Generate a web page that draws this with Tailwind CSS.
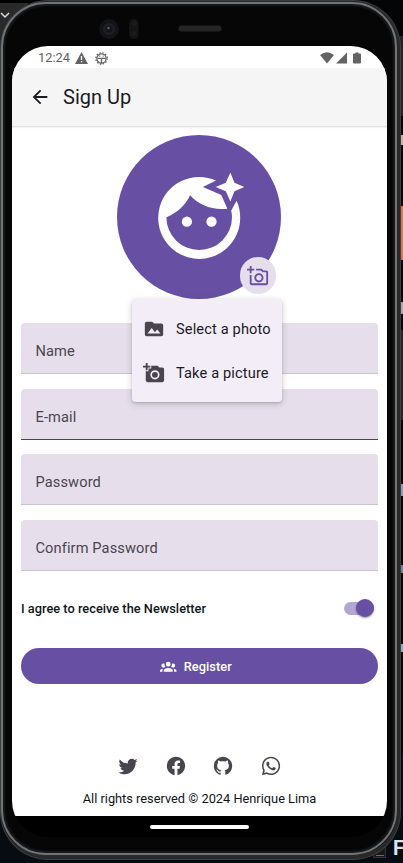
<!DOCTYPE html>
<html lang="en">
<head>
<meta charset="utf-8">
<title>Sign Up</title>
<script src="https://cdn.jsdelivr.net/npm/@tailwindcss/browser@4"></script>
</head>
<body class="relative h-[863px] w-[403px] overflow-hidden bg-[#030507] font-['Roboto',sans-serif]">
<!-- desktop behind the device -->
<div class="absolute left-0 top-0 h-12 w-7 bg-[#292929]"></div>
<div class="absolute left-0 top-0 h-[3px] w-20 bg-black"></div>
<div class="absolute right-0 top-[36px] h-[80px] w-3 bg-[#242424]"></div>
<div class="absolute right-0 top-[135px] h-[10px] w-[2px] bg-[#bdb8a5]"></div>
<div class="absolute right-0 top-[206px] h-[54px] w-[3px] bg-[#df7258]"></div>
<div class="absolute right-0 top-[302px] h-3 w-[2px] bg-[#aaaaaa]"></div>
<div class="absolute right-0 top-[330px] h-[90px] w-[2px] bg-[#262626]"></div>
<div class="absolute right-0 top-[484px] h-3 w-[2px] bg-[#83a2b6]"></div>
<div class="absolute right-0 top-[565px] h-2 w-[2px] bg-[#74899a]"></div>
<div class="absolute right-0 top-[644px] h-2 w-[2px] bg-[#8fb0b9]"></div>
<div class="absolute bottom-0 left-0 h-[110px] w-full bg-[#070b12]"></div>
<div class="absolute bottom-[5px] left-[373px] h-4 w-[13px] border border-[#333333] bg-[#171717]"></div>
<div class="absolute left-[376px] top-[855px] h-px w-2 bg-[#b44a61]"></div>
<div class="absolute left-[393px] top-[836px] text-[20px] font-bold leading-6 text-[#dce3ee]">F</div>

<!-- device -->
<div class="absolute left-0 top-0 h-[860px] w-[401px] rounded-[48px] bg-[#3c3e3f] p-px">
 <div class="h-full w-full rounded-[47px] border-b-[4px] border-l-0 border-r-[3px] border-t border-[#29292a] bg-[#0b0a0b]">
  <div class="h-full w-full rounded-[45px] border-2 border-[#707476] bg-[#060607] shadow-[inset_0_0_2px_2px_#1c1c1d]"></div>
 </div>
</div>
<svg class="absolute left-0 top-[11px] h-2 w-[10px]" viewBox="0 0 10 8" fill="none" stroke="#ddd" stroke-width="1.500"><path d="M1 2l4 4 4-4"/></svg>
<svg class="absolute left-[96px] top-[15px] h-7 w-[156px]" viewBox="0 0 156 28">
 <circle cx="13" cy="14" r="10" fill="#141416"/><circle cx="13" cy="14" r="6" fill="#1e1f24"/><circle cx="13" cy="14" r="3.500" fill="#11131d"/><circle cx="12.500" cy="13" r="1.300" fill="#535970"/>
 <rect x="33" y="4" width="9.500" height="20" rx="4.500" fill="#141415"/><circle cx="38" cy="8.500" r="3" fill="#1a1a1b"/><circle cx="38" cy="18.500" r="3" fill="#1a1a1b"/>
 <rect x="82.500" y="10.500" width="43" height="6" rx="3" fill="#252525"/>
</svg>

<!-- screen -->
<main class="absolute left-3 top-[46px] flex h-[791px] w-[375px] flex-col overflow-hidden rounded-[36px] bg-black">
 <div class="flex h-[770px] flex-col bg-white">
  <div class="flex h-[22px] shrink-0 items-center pl-[26px] pr-[25px] text-[#636363]">
   <span class="w-[37px] pt-0.5 text-[12.800px] leading-4">12:24</span>
   <svg class="mt-0.5 h-3 w-[13px]" viewBox="0 0 13 12"><path fill="currentColor" d="M6.500 0L13 12H0z"/><path stroke="#fff" stroke-width="1.300" d="M6.500 4v4M6.500 9v1.300"/></svg>
   <svg class="ml-[7px] mt-0.5 h-[13px] w-[13px]" viewBox="0 0 13 13" fill="none" stroke="currentColor"><circle cx="6.500" cy="6.500" r="5.700" stroke-width="1.300" stroke-dasharray="1.500 1.484"/><circle cx="6.500" cy="6.500" r="4.600" stroke-width="1.200"/><path stroke-width="1.300" d="M2.500 6.400h8M6.500 6.400v4.500M4.300 4.200h1M7.700 4.200h1"/></svg>
   <svg class="ml-auto mt-0.5 h-[12px] w-[42px]" viewBox="0 0 42 12" fill="currentColor"><path d="M0 3Q7-2.500 14 3L7 11.500zM16 11.500L27 .5v11zM33 2.500Q33 1.500 34 1.500h1.500V.5h3v1H40q1 0 1 1v8q0 1-1 1h-6q-1 0-1-1z"/></svg>
  </div>
  <header class="flex h-[59px] shrink-0 items-center border-b border-[#e2e2e2] bg-[#f5f5f5] pl-[17px] shadow-[0_1px_1px_#0000000c]">
   <svg class="h-[22px] w-[22px]" viewBox="0 0 24 24" fill="#1c1b1f"><path d="M20 11H7.830l5.590-5.590L12 4l-8 8 8 8 1.410-1.410L7.830 13H20z"/></svg>
   <h1 class="ml-[12px] text-[20px] leading-6 text-[#1c1b1f]">Sign Up</h1>
  </header>
  <section class="flex h-[196px] shrink-0 justify-center pr-px pt-[8.300px]">
   <div class="relative flex h-[164px] w-[164px] items-center justify-center rounded-full bg-[#6750a4]">
    <svg class="h-[98.400px] w-[98.400px]" viewBox="0 0 24 24" fill="#fff">
     <circle cx="9" cy="13.100" r="1.250"/><circle cx="15" cy="13.100" r="1.250"/>
     <path d="M19.600 1.100L20.600 3.600 23 4.650 20.600 5.700 19.600 8.200 18.500 5.700 16 4.650 18.500 3.600z"/>
     <path d="M21.100 8L19.800 10.400C19.930 10.920 20 11.450 20 12A8 8 0 0 1 4 12C6.610 10.950 8.740 9 9.760 6.640C11.600 8.720 14.400 10 17.500 10Q18.200 10 18.870 9.950L17.400 6.600 12.900 4.650 16.100 3.050A10 10 0 1 0 22 12C22 10.580 21.690 9.220 21.100 8z"/>
    </svg>
    <div class="absolute left-[122.500px] top-[122px] flex h-[36.500px] w-[36.500px] items-center justify-center rounded-full bg-[#e6dfeb]">
     <svg class="h-[22px] w-[22px]" viewBox="0 0 24 24" fill="#6750a4"><path d="M21 6h-3.170L16 4h-6v2h5.120l1.830 2H21v12H5v-9H3v9c0 1.100.9 2 2 2h16c1.100 0 2-.9 2-2V8c0-1.100-.9-2-2-2zM8 14c0 2.760 2.240 5 5 5s5-2.240 5-5-2.240-5-5-5-5 2.240-5 5zm5-3c1.650 0 3 1.350 3 3s-1.350 3-3 3-3-1.350-3-3 1.350-3 3-3zM5 6h3V4H5V1H3v3H0v2h3v3h2z"/></svg>
    </div>
   </div>
  </section>
  <form class="flex shrink-0 flex-col gap-[14.700px] px-[9px] text-[14.600px] leading-5 tracking-[0.12px] text-[#49454f]">
   <div class="flex h-[51px] items-center rounded-t-[4px] border-b border-[#cac4d0] bg-[#e6dfeb] pl-[14.500px] pt-[6px]">Name</div>
   <div class="flex h-[51px] items-center rounded-t-[4px] border-b border-[#49454f] bg-[#e6dfeb] pl-[14.500px] pt-[6px]">E-mail</div>
   <div class="flex h-[51px] items-center rounded-t-[4px] border-b border-[#cac4d0] bg-[#e6dfeb] pl-[14.500px] pt-[6px]">Password</div>
   <div class="flex h-[51px] items-center rounded-t-[4px] border-b border-[#cac4d0] bg-[#e6dfeb] pl-[14.500px] pt-[6px]">Confirm Password</div>
  </form>
  <div class="mt-[23px] flex h-7 shrink-0 items-center justify-between pl-[9px] pr-[13px]">
   <span class="pt-px text-[12.800px] font-medium tracking-[0.01px] text-[#101518]">I agree to receive the Newsletter</span>
   <div class="flex h-[13px] w-[30px] items-center justify-end rounded-full bg-[#b3a7d2]"><div class="h-[18.500px] w-[18.500px] shrink-0 rounded-full bg-[#6750a4] shadow-[0_1px_2px_#00000066]"></div></div>
  </div>
  <div class="mx-[9px] mt-[26px] flex h-9 shrink-0 items-center justify-center gap-[7px] rounded-full bg-[#6750a4] pr-[7px] pt-px text-white">
   <svg class="h-[16.500px] w-[16.500px]" viewBox="0 0 24 24" fill="currentColor"><path d="M12,5.500A3.500,3.500 0 0,1 15.500,9A3.500,3.500 0 0,1 12,12.500A3.500,3.500 0 0,1 8.500,9A3.500,3.500 0 0,1 12,5.500M5,8C5.560,8 6.080,8.150 6.530,8.420C6.380,9.850 6.800,11.270 7.660,12.380C7.160,13.340 6.160,14 5,14A3,3 0 0,1 2,11A3,3 0 0,1 5,8M19,8A3,3 0 0,1 22,11A3,3 0 0,1 19,14C17.840,14 16.840,13.340 16.340,12.380C17.200,11.270 17.620,9.850 17.470,8.420C17.920,8.150 18.440,8 19,8M5.500,18.250C5.500,16.180 8.410,14.500 12,14.500C15.590,14.500 18.500,16.180 18.500,18.250V20H5.500V18.250M0,20V18.500C0,17.110 1.890,15.940 4.450,15.600C3.860,16.280 3.500,17.220 3.500,18.250V20H0M24,20H20.500V18.250C20.500,17.220 20.140,16.280 19.550,15.600C22.110,15.940 24,17.110 24,18.500V20Z"/></svg>
   <span class="text-[12.800px] font-medium tracking-[0.04px]">Register</span>
  </div>
  <footer class="mt-auto flex shrink-0 flex-col items-center pb-[8px]">
   <div class="flex gap-[25.400px] text-[#49454f]">
    <svg class="h-[22px] w-[22px]" viewBox="0 0 24 24" fill="currentColor"><path d="M22.460,6C21.690,6.350 20.860,6.580 20,6.690C20.880,6.160 21.560,5.320 21.880,4.310C21.050,4.810 20.130,5.160 19.160,5.360C18.370,4.500 17.260,4 16,4C13.650,4 11.730,5.920 11.730,8.290C11.730,8.630 11.770,8.960 11.840,9.270C8.280,9.090 5.110,7.380 3,4.790C2.630,5.420 2.420,6.160 2.420,6.940C2.420,8.430 3.170,9.750 4.330,10.500C3.620,10.500 2.960,10.300 2.380,10V10.030C2.380,12.110 3.860,13.850 5.820,14.240C5.460,14.340 5.080,14.390 4.690,14.390C4.420,14.390 4.150,14.360 3.890,14.310C4.430,16 6,17.260 7.890,17.290C6.430,18.450 4.580,19.130 2.560,19.130C2.220,19.130 1.880,19.110 1.540,19.070C3.440,20.290 5.700,21 8.120,21C16,21 20.330,14.460 20.330,8.790C20.330,8.600 20.330,8.420 20.320,8.230C21.160,7.630 21.880,6.870 22.460,6Z"/></svg>
    <svg class="h-[22px] w-[22px]" viewBox="0 0 24 24" fill="currentColor"><path d="M12 2.040C6.500 2.040 2 6.530 2 12.060C2 17.060 5.660 21.210 10.440 21.960V14.960H7.900V12.060H10.440V9.850C10.440 7.340 11.930 5.960 14.220 5.960C15.310 5.960 16.450 6.150 16.450 6.150V8.620H15.190C13.950 8.620 13.560 9.390 13.560 10.180V12.060H16.340L15.890 14.960H13.560V21.960A10 10 0 0 0 22 12.060C22 6.530 17.500 2.040 12 2.040Z"/></svg>
    <svg class="h-[22px] w-[22px]" viewBox="0 0 24 24" fill="currentColor"><path d="M12,2A10,10 0 0,0 2,12C2,16.420 4.870,20.170 8.840,21.500C9.340,21.580 9.500,21.270 9.500,21C9.500,20.770 9.500,20.140 9.500,19.310C6.730,19.910 6.140,17.970 6.140,17.970C5.680,16.810 5.030,16.500 5.030,16.500C4.120,15.880 5.100,15.900 5.100,15.900C6.100,15.970 6.630,16.930 6.630,16.930C7.500,18.450 8.970,18 9.540,17.760C9.630,17.110 9.890,16.670 10.170,16.420C7.950,16.170 5.620,15.310 5.620,11.500C5.620,10.390 6,9.500 6.650,8.790C6.550,8.540 6.200,7.500 6.750,6.150C6.750,6.150 7.590,5.880 9.500,7.170C10.290,6.950 11.150,6.840 12,6.840C12.850,6.840 13.710,6.950 14.500,7.170C16.410,5.880 17.250,6.150 17.250,6.150C17.800,7.500 17.450,8.540 17.350,8.790C18,9.500 18.380,10.390 18.380,11.500C18.380,15.320 16.040,16.160 13.810,16.410C14.170,16.720 14.500,17.330 14.500,18.260C14.500,19.600 14.500,20.680 14.500,21C14.500,21.270 14.660,21.590 15.170,21.500C19.140,20.160 22,16.420 22,12A10,10 0 0,0 12,2Z"/></svg>
    <svg class="h-[22px] w-[22px]" viewBox="0 0 24 24" fill="currentColor"><path fill-rule="evenodd" d="M12.040 2C6.580 2 2.130 6.450 2.130 11.910C2.130 13.660 2.590 15.360 3.450 16.860L2.050 22L7.300 20.620C8.750 21.410 10.380 21.830 12.040 21.830C17.500 21.830 21.950 17.380 21.950 11.920C21.950 9.270 20.920 6.780 19.050 4.910C17.180 3.030 14.690 2 12.040 2M12.050 3.670C14.250 3.670 16.310 4.530 17.870 6.090C19.420 7.650 20.280 9.720 20.280 11.920C20.280 16.460 16.580 20.150 12.040 20.150C10.560 20.150 9.110 19.760 7.850 19L7.550 18.830L4.430 19.650L5.260 16.610L5.060 16.290C4.240 15 3.800 13.470 3.800 11.910C3.810 7.370 7.500 3.670 12.050 3.670M8.530 7.330C8.370 7.330 8.100 7.390 7.870 7.640C7.650 7.890 7 8.500 7 9.710C7 10.930 7.890 12.100 8 12.270C8.140 12.440 9.760 14.940 12.250 16C12.840 16.270 13.300 16.420 13.660 16.530C14.250 16.720 14.790 16.690 15.220 16.630C15.700 16.560 16.680 16.030 16.890 15.450C17.100 14.870 17.100 14.380 17.040 14.270C16.970 14.170 16.810 14.110 16.560 14C16.310 13.860 15.090 13.260 14.870 13.180C14.640 13.100 14.500 13.060 14.310 13.300C14.150 13.550 13.670 14.110 13.530 14.270C13.380 14.440 13.240 14.460 13 14.340C12.740 14.210 11.940 13.950 11 13.110C10.260 12.450 9.770 11.640 9.620 11.390C9.500 11.150 9.610 11 9.730 10.890C9.840 10.780 10 10.600 10.100 10.450C10.230 10.310 10.270 10.200 10.350 10.040C10.430 9.870 10.390 9.730 10.330 9.610C10.270 9.500 9.770 8.260 9.560 7.770C9.360 7.290 9.160 7.350 9 7.340Z"/></svg>
   </div>
   <p class="mt-[13px] text-[12.800px] leading-[18px] text-[#101518]">All rights reserved © 2024 Henrique Lima</p>
  </footer>
 </div>
 <div class="mx-auto mt-[9px] h-1 w-[99px] rounded-full bg-white"></div>
</main>

<!-- photo source menu -->
<div class="absolute left-[132px] top-[299px] flex h-[103px] w-[149.500px] flex-col rounded-[4px] bg-[#f3edf7] pl-[11px] pt-2 text-[14.600px] tracking-[0.14px] text-[#1c1b1f] shadow-[0_2px_6px_1px_#00000026,0_1px_2px_#00000026]">
 <div class="flex h-11 items-center gap-[11px]">
  <svg class="h-[22px] w-[22px]" viewBox="0 0 24 24" fill="#49454f"><path d="M5 17L9.500 11L13 15.500L15.500 12.500L19 17M20 6H12L10 4H4A2 2 0 0 0 2 6V18A2 2 0 0 0 4 20H20A2 2 0 0 0 22 18V8A2 2 0 0 0 20 6Z"/></svg>
  <span class="whitespace-nowrap pt-[2px]">Select a photo</span>
 </div>
 <div class="flex h-11 items-center gap-[11px]">
  <svg class="h-[22px] w-[22px]" viewBox="0 0 24 24" fill="#49454f"><path d="M3 4V1h2v3h3v2H5v3H3V6H0V4h3zm3 6V7h3V4h7l1.830 2H21c1.100 0 2 .9 2 2v12c0 1.100-.9 2-2 2H5c-1.100 0-2-.9-2-2V10h3z"/><circle cx="13" cy="14" r="4.100" fill="none" stroke="#f3edf7" stroke-width="1.800"/></svg>
  <span class="whitespace-nowrap pt-[2px]">Take a picture</span>
 </div>
</div>
</body>
</html>
